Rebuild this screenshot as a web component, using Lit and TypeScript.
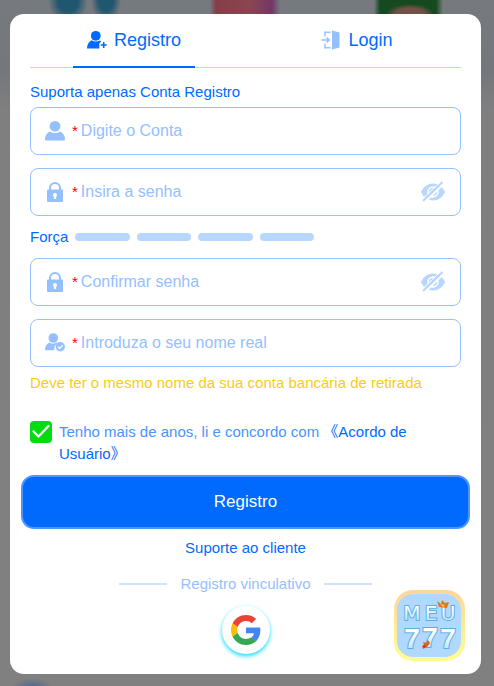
import { LitElement, html, css, svg } from "lit";
import { customElement, property, state } from "lit/decorators.js";

const userIcon = svg`<path d="M10 0a5.500 5.300 0 0 1 5.500 5.300A5.500 5.300 0 0 1 10 10.600a5.500 5.300 0 0 1-5.500-5.300A5.500 5.300 0 0 1 10 0zM5 10.600Q10 14 15 10.600Q19.800 12.500 20 18.500Q20 19.600 19 19.600H1Q0 19.600 0 18.500Q.2 12.500 5 10.600z"/>`;

const lockIcon = svg`<path d="M5 9V6a5 5 0 0 1 10 0V9" fill="none" stroke="currentColor" stroke-width="2"/><path fill-rule="evenodd" d="M3 7.500h14a1 1 0 0 1 1 1V19a1 1 0 0 1-1 1H3a1 1 0 0 1-1-1V8.500a1 1 0 0 1 1-1zM10 11a2 2 0 0 0-1.200 3.600V17h2.400v-2.400A2 2 0 0 0 10 11z"/>`;

const verifiedIcon = svg`<circle cx="8.300" cy="5" r="4.800"/><path d="M4.500 9.500Q8 11.900 11.800 9.600L13 10.200A5.600 5.600 0 0 0 9.500 17.300H0Q0 11.500 4.500 9.500z"/><circle cx="15.300" cy="13.700" r="4.700"/><path d="M12.800 13.600l1.900 1.900 3.200-3.400" fill="none" stroke="#fff" stroke-width="1.300"/>`;

const icons = { user: userIcon, lock: lockIcon, verified: verifiedIcon };
type IconName = keyof typeof icons;

@customElement("form-field")
class FormField extends LitElement {
  @property() icon: IconName = "user";
  @property() label = "";
  @property({ type: Boolean }) secret = false;
  @state() private shown = false;

  static styles = css`
    :host { display: block; }
    .box {
      display: flex;
      align-items: center;
      height: 48px;
      box-sizing: border-box;
      padding: 0 14px;
      border: 1px solid #94c2ff;
      border-radius: 8px;
      color: #94c0ff;
    }
    .icon { width: 20px; height: 20px; flex: none; fill: currentColor; }
    .star { margin: 0 3px 0 7px; color: #f00; font-size: 15px; line-height: 20px; }
    .input {
      flex: 1;
      min-width: 0;
      padding: 0;
      border: 0;
      outline: 0;
      background: none;
      color: #006aff;
      font: 16px/20px "Liberation Sans", Arial, sans-serif;
    }
    .input::placeholder { color: #94c0ff; opacity: 1; }
    .eye { display: flex; padding: 0; border: 0; background: none; color: #b8d7ff; cursor: pointer; }
    .eye-icon { width: 26px; height: 22px; fill: currentColor; }
  `;

  render() {
    return html`<label class="box">
      <svg class="icon" viewBox="0 0 20 20" aria-hidden="true">${icons[this.icon]}</svg>
      <span class="star">*</span>
      <input class="input" aria-label=${this.label} placeholder=${this.label}
        type=${this.secret && !this.shown ? "password" : "text"} />
      ${this.secret
        ? html`<button class="eye" type="button" aria-label="Mostrar senha" @click=${() => (this.shown = !this.shown)}>
            <svg class="eye-icon" viewBox="0 0 26 22">
              <path d="M.8 11Q5 2.500 13 2.500T25.200 11Q21 19.500 13 19.500T.8 11z"/>
              <circle cx="13" cy="11" r="4.900" fill="none" stroke="#fff" stroke-width="1.600"/>
              <path d="M4.500 21.500L24 2.500" stroke="#fff" stroke-width="2"/>
              <path d="M3 20L22.500 1" stroke="currentColor" stroke-width="2"/>
              <path d="M2 18.500L21 0" stroke="#fff" stroke-width="1"/>
            </svg>
          </button>`
        : null}
    </label>`;
  }
}

@customElement("app-root")
class AppRoot extends LitElement {
  static styles = css`
    :host {
      display: block;
      box-sizing: border-box;
      min-height: 100vh;
      padding: 14px 13px 12px 10px;
      font: 15px/22px "Liberation Sans", Arial, "Noto Sans CJK SC", sans-serif;
      color: #006aff;
      background:
        radial-gradient(ellipse 20px 24px at 68px 0, #21566f 50%, transparent),
        radial-gradient(ellipse 15px 22px at 106px 0, #21566f 50%, transparent),
        linear-gradient(90deg, transparent 210px, #863e46 216px, #8a4551 250px, #743766 272px, transparent 280px) 0 0 / 100% 14px no-repeat,
        radial-gradient(ellipse 24px 10px at 410px 14px, #705047 60%, transparent),
        linear-gradient(90deg, transparent 374px, #15491f 380px, #15491f 436px, transparent 443px) 0 0 / 100% 14px no-repeat,
        radial-gradient(ellipse 20px 10px at 32px 688px, #526b8d 20%, transparent),
        linear-gradient(#76797d, #74777b 70px, #7f7f7f 110px, #808080);
    }
    .card {
      position: relative;
      box-sizing: border-box;
      min-height: calc(100vh - 26px);
      padding: 0 20px 16px;
      border-radius: 14px;
      background: #fff;
    }
    .tabs { display: flex; justify-content: center; gap: 101px; height: 53px; border-bottom: 1px solid #b8d7ff; }
    .tab {
      display: flex;
      align-items: center;
      justify-content: center;
      gap: 7px;
      width: 122px;
      height: 54px;
      padding: 0;
      border: 0;
      border-bottom: 2px solid transparent;
      background: none;
      color: inherit;
      font: 18px/22px "Liberation Sans", Arial, sans-serif;
      cursor: pointer;
    }
    .active { border-color: #006aff; }
    .tab-icon { width: 20px; height: 20px; fill: currentColor; }
    .pale { color: #94c0ff; }
    .intro { margin: 13px 0 4px; }
    .gap { margin-top: 13px; }
    .strength { display: flex; align-items: center; gap: 7px; height: 42px; }
    .bars { display: flex; gap: 7px; width: 239px; }
    .bar { flex: 1; height: 8px; border-radius: 4px; background: #b8d7ff; }
    .hint { margin: 5px 0 0; color: #facc15; }
    .agree { display: flex; gap: 7px; margin-top: 27px; color: #4a93ff; }
    .tick { display: grid; flex: none; width: 22px; height: 22px; }
    .tick-input { grid-area: 1 / 1; appearance: none; width: 22px; height: 22px; margin: 0; border-radius: 4px; background: #b8d7ff; }
    .tick-input:checked { background: #04dc12; }
    .tick-mark { grid-area: 1 / 1; width: 22px; height: 22px; z-index: 1; pointer-events: none; }
    .link { color: #006aff; text-decoration: none; }
    .submit {
      display: block;
      width: calc(100% + 18px);
      height: 54px;
      margin: 10px -9px 0;
      border: 2px solid #4b97ff;
      border-radius: 13px;
      background: #006aff;
      color: #fff;
      font: 17px/22px "Liberation Sans", Arial, sans-serif;
      cursor: pointer;
    }
    .support { margin: 8px 0 0; text-align: center; }
    .divider { display: flex; align-items: center; justify-content: center; gap: 13px; margin-top: 14px; color: #94c0ff; }
    .rule { width: 48px; height: 2px; background: #d0e4ff; }
    .google {
      display: grid;
      place-items: center;
      width: 48px;
      height: 48px;
      margin: 11px auto 0;
      padding: 0;
      border: 0;
      border-radius: 50%;
      background: #fff;
      box-shadow: 0 2px 4px #10d8fb;
      cursor: pointer;
    }
    .google-icon { width: 30px; height: 30px; }
    .brand { position: absolute; right: 16px; bottom: 13px; width: 71px; height: 71px; }
    .brand-logo { display: block; width: 71px; height: 71px; }
    .brand-name { font: 20px "DejaVu Sans", sans-serif; }
    .brand-number { font: bold 28px "Liberation Sans", Arial, sans-serif; }
  `;

  render() {
    return html`<main class="card">
      <nav class="tabs">
        <button class="tab active" type="button">
          <svg class="tab-icon" viewBox="0 0 20 20" aria-hidden="true">
            <circle cx="8.800" cy="5.800" r="4.900"/>
            <path d="M4.500 10.200Q8.500 12.800 13 10.500L14.200 11.500 12.300 13.500V18.500H0Q.2 12.500 4.500 10.200z"/>
            <path d="M16.700 12v6M13.700 15h6" fill="none" stroke="currentColor" stroke-width="1.600"/>
          </svg>Registro
        </button>
        <button class="tab" type="button">
          <svg class="tab-icon pale" viewBox="0 0 20 20" aria-hidden="true">
            <path d="M11 .5L18.500 2.500V17.500L11 19.500z"/>
            <path d="M9.500 2.300H4v4.200M4 13.500v4.200h5.500M.5 10h7.300M5.600 7.500L8.200 10l-2.600 2.500" fill="none" stroke="currentColor" stroke-width="1.500"/>
          </svg>Login
        </button>
      </nav>
      <form>
        <p class="intro">Suporta apenas Conta Registro</p>
        <form-field icon="user" label="Digite o Conta"></form-field>
        <form-field class="gap" icon="lock" label="Insira a senha" secret></form-field>
        <div class="strength">Força
          <div class="bars">${[1, 2, 3, 4].map(() => html`<span class="bar"></span>`)}</div>
        </div>
        <form-field icon="lock" label="Confirmar senha" secret></form-field>
        <form-field class="gap" icon="verified" label="Introduza o seu nome real"></form-field>
        <p class="hint">Deve ter o mesmo nome da sua conta bancária de retirada</p>
        <div class="agree">
          <span class="tick">
            <input class="tick-input" id="agree" type="checkbox" checked />
            <svg class="tick-mark" viewBox="0 0 22 22" aria-hidden="true"><path d="M3.500 10.500l5 5L18.500 5" fill="none" stroke="#fff" stroke-width="2.300" stroke-linecap="round" stroke-linejoin="round"/></svg>
          </span>
          <label for="agree">Tenho mais de anos, li e concordo com <a class="link" href="#acordo">《Acordo de Usuário》</a></label>
        </div>
        <button class="submit" type="button">Registro</button>
      </form>
      <p class="support"><a class="link" href="#suporte">Suporte ao cliente</a></p>
      <div class="divider"><span class="rule"></span>Registro vinculativo<span class="rule"></span></div>
      <button class="google" type="button" aria-label="Google">
        <svg class="google-icon" viewBox="0 0 48 48">
          <path fill="#ea4335" d="M24 9.500c3.540 0 6.710 1.220 9.210 3.600l6.850-6.850C35.900 2.380 30.470 0 24 0 14.620 0 6.510 5.380 2.560 13.220l7.980 6.190C12.430 13.720 17.740 9.500 24 9.500z"/>
          <path fill="#4285f4" d="M46.980 24.550c0-1.570-.15-3.090-.38-4.550H24v9.020h12.940c-.58 2.960-2.260 5.480-4.780 7.180l7.730 6c4.510-4.180 7.090-10.360 7.090-17.650z"/>
          <path fill="#fbbc05" d="M10.530 28.590c-.48-1.450-.76-2.990-.76-4.590s.27-3.140.76-4.590l-7.980-6.190C.92 16.460 0 20.120 0 24c0 3.880.92 7.540 2.560 10.780l7.970-6.190z"/>
          <path fill="#34a853" d="M24 48c6.480 0 11.930-2.130 15.890-5.810l-7.730-6c-2.150 1.450-4.920 2.300-8.160 2.300-6.260 0-11.570-4.220-13.470-9.910l-7.980 6.190C6.510 42.620 14.620 48 24 48z"/>
        </svg>
      </button>
      <a class="brand" href="#inicio" aria-label="MEU 777">
        <svg class="brand-logo" viewBox="0 0 71 71">
          <defs>
            <linearGradient id="edge" x2="0" y2="1"><stop stop-color="#ffd59b"/><stop offset="1" stop-color="#fffd90"/></linearGradient>
            <linearGradient id="ice" x2="0" y2="1"><stop offset=".3" stop-color="#fff"/><stop offset="1" stop-color="#a5e2fb"/></linearGradient>
          </defs>
          <rect width="71" height="71" rx="19" fill="url(#edge)"/>
          <rect x="3" y="4" width="64" height="63" rx="16" fill="#b1d8ff"/>
          <g fill="url(#ice)" stroke="#5aaee0" stroke-width="2" paint-order="stroke" text-anchor="middle">
            <text class="brand-name" x="18" y="30">M</text>
            <text class="brand-name" x="37" y="30">E</text>
            <text class="brand-name" x="54" y="30">U</text>
            <text class="brand-number" x="18" y="58">7</text>
            <text class="brand-number" x="36" y="57">7</text>
            <text class="brand-number" x="54" y="58">7</text>
          </g>
          <path d="M43 11l4 3 1-4 3 3 4-1-2 6-8-1z" fill="#d87a1d"/><path d="M46 14l5 1-2 2z" fill="#ffc34a"/>
          <path d="M29 52l3 1 2-3 2 3-3 4-4 2-1-3 2-1z" fill="#d8651d"/><path d="M29 55l3 1-2 2z" fill="#e32020"/>
        </svg>
      </a>
    </main>`;
  }
}
